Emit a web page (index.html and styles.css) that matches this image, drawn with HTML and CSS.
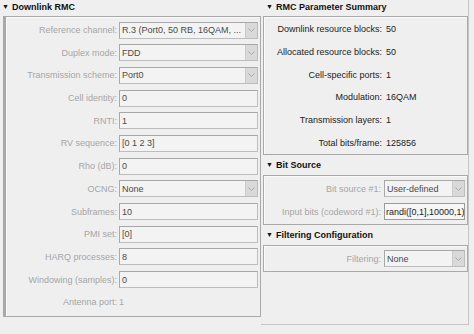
FILE: index.html
```html
<!DOCTYPE html>
<html lang="en">
<head>
    <meta charset="UTF-8">
    <title>Downlink RMC</title>
    <link rel="stylesheet" href="styles.css">
</head>
<body>
    <div class="app">
        <div class="col-left">
            <div class="sec-head"><span class="tri">&#9660;</span>Downlink RMC</div>
            <div class="box box-main">
                <div class="row"><span class="lbl">Reference channel:</span><div class="fld sel"><span class="val">R.3 (Port0, 50 RB, 16QAM, ...</span><span class="arr"><svg width="7" height="4" viewBox="0 0 7 4"><polyline points="0.5,0.5 3.5,3.5 6.5,0.5" fill="none" stroke="#a9a9a9" stroke-width="1"/></svg></span></div></div>
                <div class="row"><span class="lbl">Duplex mode:</span><div class="fld sel"><span class="val">FDD</span><span class="arr"><svg width="7" height="4" viewBox="0 0 7 4"><polyline points="0.5,0.5 3.5,3.5 6.5,0.5" fill="none" stroke="#a9a9a9" stroke-width="1"/></svg></span></div></div>
                <div class="row"><span class="lbl">Transmission scheme:</span><div class="fld sel"><span class="val">Port0</span><span class="arr"><svg width="7" height="4" viewBox="0 0 7 4"><polyline points="0.5,0.5 3.5,3.5 6.5,0.5" fill="none" stroke="#a9a9a9" stroke-width="1"/></svg></span></div></div>
                <div class="row"><span class="lbl">Cell identity:</span><div class="fld"><span class="val">0</span></div></div>
                <div class="row"><span class="lbl">RNTI:</span><div class="fld"><span class="val">1</span></div></div>
                <div class="row"><span class="lbl">RV sequence:</span><div class="fld"><span class="val">[0 1 2 3]</span></div></div>
                <div class="row"><span class="lbl">Rho (dB):</span><div class="fld"><span class="val">0</span></div></div>
                <div class="row"><span class="lbl">OCNG:</span><div class="fld sel"><span class="val">None</span><span class="arr"><svg width="7" height="4" viewBox="0 0 7 4"><polyline points="0.5,0.5 3.5,3.5 6.5,0.5" fill="none" stroke="#a9a9a9" stroke-width="1"/></svg></span></div></div>
                <div class="row"><span class="lbl">Subframes:</span><div class="fld"><span class="val">10</span></div></div>
                <div class="row"><span class="lbl">PMI set:</span><div class="fld"><span class="val">[0]</span></div></div>
                <div class="row"><span class="lbl">HARQ processes:</span><div class="fld"><span class="val">8</span></div></div>
                <div class="row"><span class="lbl">Windowing (samples):</span><div class="fld"><span class="val">0</span></div></div>
                <div class="row"><span class="lbl">Antenna port:</span><span class="plain">1</span></div>
            </div>
        </div>

        <div class="col-right">
            <div class="sec-head"><span class="tri">&#9660;</span>RMC Parameter Summary</div>
            <div class="box box-sum">
                <div class="row"><span class="lbl dark">Downlink resource blocks:</span><span class="out">50</span></div>
                <div class="row"><span class="lbl dark">Allocated resource blocks:</span><span class="out">50</span></div>
                <div class="row"><span class="lbl dark">Cell-specific ports:</span><span class="out">1</span></div>
                <div class="row"><span class="lbl dark">Modulation:</span><span class="out">16QAM</span></div>
                <div class="row"><span class="lbl dark">Transmission layers:</span><span class="out">1</span></div>
                <div class="row"><span class="lbl dark">Total bits/frame:</span><span class="out">125856</span></div>
            </div>

            <div class="sec-head sub"><span class="tri">&#9660;</span>Bit Source</div>
            <div class="box box-small">
                <div class="row"><span class="lbl">Bit source #1:</span><div class="fld sel"><span class="val">User-defined</span><span class="arr"><svg width="7" height="4" viewBox="0 0 7 4"><polyline points="0.5,0.5 3.5,3.5 6.5,0.5" fill="none" stroke="#a9a9a9" stroke-width="1"/></svg></span></div></div>
                <div class="row"><span class="lbl">Input bits (codeword #1):</span><div class="fld active"><span class="val">randi([0,1],10000,1)</span></div></div>
            </div>

            <div class="sec-head sub"><span class="tri">&#9660;</span>Filtering Configuration</div>
            <div class="box box-small">
                <div class="row"><span class="lbl">Filtering:</span><div class="fld sel"><span class="val">None</span><span class="arr"><svg width="7" height="4" viewBox="0 0 7 4"><polyline points="0.5,0.5 3.5,3.5 6.5,0.5" fill="none" stroke="#a9a9a9" stroke-width="1"/></svg></span></div></div>
            </div>
        </div>
    </div>
</body>
</html>
```

FILE: styles.css
```css
html, body {
    margin: 0;
    padding: 0;
}
body {
    width: 474px;
    height: 334px;
    overflow: hidden;
    background-color: #efefef;
    font-family: "Liberation Sans", Arial, sans-serif;
    font-size: 9px;
    color: #222;
}
.app {
    display: flex;
    align-items: flex-start;
}
.col-left {
    width: 261px;
}
.col-right {
    width: 207px;
    height: 324px;
    border-right: 1px solid #c4c4c4;
    border-bottom: 1px solid #c4c4c4;
}
.sec-head {
    height: 16px;
    line-height: 15px;
    padding-left: 2px;
    font-weight: bold;
    font-size: 9px;
    color: #111;
    white-space: nowrap;
}
.col-right .sec-head {
    padding-left: 5px;
}
.sec-head.sub {
    height: 20px;
    line-height: 21px;
}
.tri {
    font-size: 7px;
    margin-right: 3px;
    position: relative;
    top: -1px;
}
.box {
    border: 1px solid #a9a9a9;
    box-shadow: inset 1px 1px 0 #fafafa;
    display: flex;
    flex-direction: column;
}
.box-main {
    margin-left: 3px;
    border-left-width: 3px;
    padding: 4.5px 2px 5px 0;
    gap: 5.7px;
    height: 289px;
}
.box-sum {
    margin-left: 2px;
    padding: 3.5px 2px 3px 0;
    gap: 5.8px;
}
.box-small {
    margin-left: 2px;
    padding: 4px 2px 4px 0;
    gap: 6px;
}
.row {
    display: flex;
    align-items: center;
    height: 17px;
}
.lbl {
    flex: none;
    width: 111px;
    text-align: right;
    color: #a6a6a6;
    white-space: nowrap;
    padding-right: 2px;
}
.box-sum .lbl {
    width: 118px;
    padding-right: 4px;
}
.box-small .lbl {
    width: 117px;
    padding-right: 3px;
}
.lbl.dark {
    color: #222;
}
.plain {
    color: #a6a6a6;
}
.out {
    color: #222;
}
.fld {
    flex: 1;
    height: 17px;
    box-sizing: border-box;
    display: flex;
    align-items: center;
    background-color: #f3f3f3;
    border: 1px solid #bdbdbd;
    border-top-color: #a8a8a8;
    border-left-color: #a8a8a8;
    overflow: hidden;
}
.fld.active {
    background-color: #f6f6f6;
    border-color: #9c9c9c;
}
.val {
    flex: 1;
    padding-left: 2px;
    color: #4a4a4a;
    white-space: nowrap;
    overflow: hidden;
}
.fld.active .val {
    color: #222;
    padding-left: 1px;
}
.arr {
    flex: none;
    width: 11px;
    height: 15px;
    display: flex;
    align-items: center;
    justify-content: center;
    background-color: #d9d9d9;
    border-left: 1px solid #cacaca;
}
```
